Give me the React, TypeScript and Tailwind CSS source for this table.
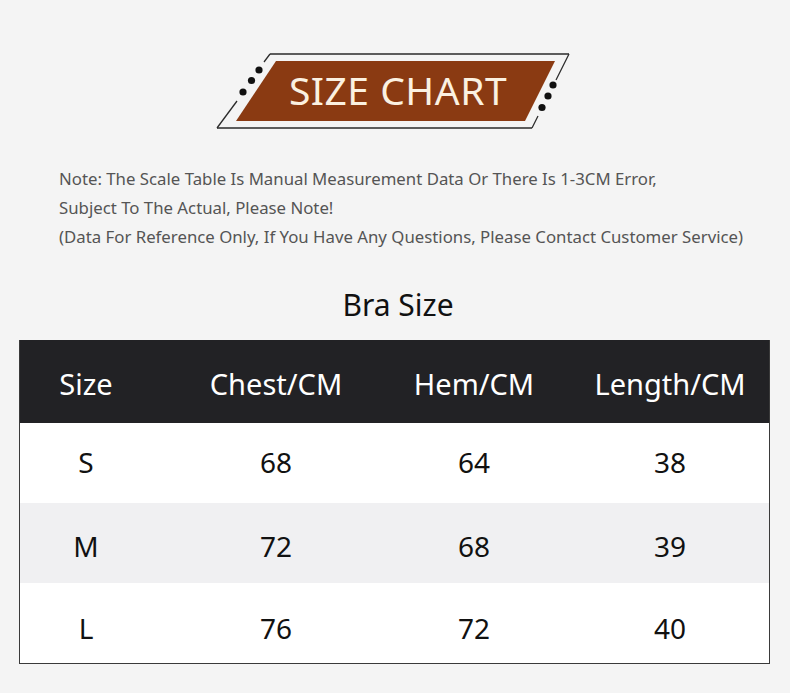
const rows = [
  { cells: ["S", "68", "64", "38"], bg: "bg-white", pad: "pb-[2px]" },
  { cells: ["M", "72", "68", "39"], bg: "bg-[#f0f0f2]", pad: "pt-[5px]" },
  { cells: ["L", "76", "72", "40"], bg: "bg-white", pad: "pt-[10px]" },
];

const heads = ["Size", "Chest/CM", "Hem/CM", "Length/CM"];

const cols = "grid grid-cols-[132px_248px_148px_1fr]";

function Banner() {
  // svg covers page x 210..580, y 45..140
  return (
    <div className="relative mx-auto h-[95px] w-[370px]">
      <svg width="370" height="95" viewBox="210 45 370 95" className="block">
        <g stroke="#2a2a2a" strokeWidth="1.3" fill="none">
          <line x1="270" y1="54" x2="569" y2="54" />
          <line x1="569" y1="54" x2="556" y2="80" />
          <line x1="538" y1="116" x2="532" y2="128" />
          <line x1="532" y1="128" x2="217" y2="128" />
          <line x1="217" y1="128" x2="237" y2="101" />
          <line x1="264" y1="62" x2="270" y2="54" />
        </g>
        <polygon points="276,61 555,61 525,121 236,121" fill="#8a3a12" />
        <g fill="#111">
          <circle cx="259" cy="70" r="3.6" />
          <circle cx="251.5" cy="80.5" r="3.6" />
          <circle cx="243" cy="92" r="3.6" />
          <circle cx="553" cy="85" r="3.6" />
          <circle cx="548" cy="96" r="3.6" />
          <circle cx="542" cy="107.5" r="3.6" />
        </g>
      </svg>
      <div className="absolute inset-0 flex items-center justify-center pl-[6px] pb-[7px]">
        <span className="text-[39px] leading-none tracking-[0.5px] text-[#fbf1e1]">SIZE CHART</span>
      </div>
    </div>
  );
}

export default function App() {
  return (
    <div
      className="h-[693px] w-[790px] overflow-hidden bg-[#f4f4f4] pt-[45px]"
      style={{ fontFamily: '"Noto Sans", "Noto Sans CJK SC", sans-serif' }}
    >
      <Banner />

      <div className="mt-[24px] pl-[59px] text-[16.8px] leading-[29px] text-[#555]">
        <p>Note: The Scale Table Is Manual Measurement Data Or There Is 1-3CM Error,</p>
        <p>Subject To The Actual, Please Note!</p>
        <p>(Data For Reference Only, If You Have Any Questions, Please Contact Customer Service)</p>
      </div>

      <h2 className="mt-[34px] pl-[6px] text-center text-[30px] leading-[40px] text-[#111]">Bra Size</h2>

      <div className="mx-[19px] mt-[15px] w-[751px] border-x border-b border-[#3a3a3a]">
        <div className={`${cols} h-[83px] items-center bg-[#222225] pt-[4px] text-[29px] text-white`}>
          {heads.map((h, i) => (
            <div key={h} className={`text-center ${i === 3 ? "pl-[23px]" : ""}`}>
              {h}
            </div>
          ))}
        </div>
        {rows.map((r) => (
          <div key={r.cells[0]} className={`${cols} h-[80px] items-center text-[28px] text-[#111] ${r.bg} ${r.pad}`}>
            {r.cells.map((c, i) => (
              <div key={i} className={`text-center ${i === 3 ? "pl-[23px]" : ""}`}>
                {c}
              </div>
            ))}
          </div>
        ))}
      </div>
    </div>
  );
}
